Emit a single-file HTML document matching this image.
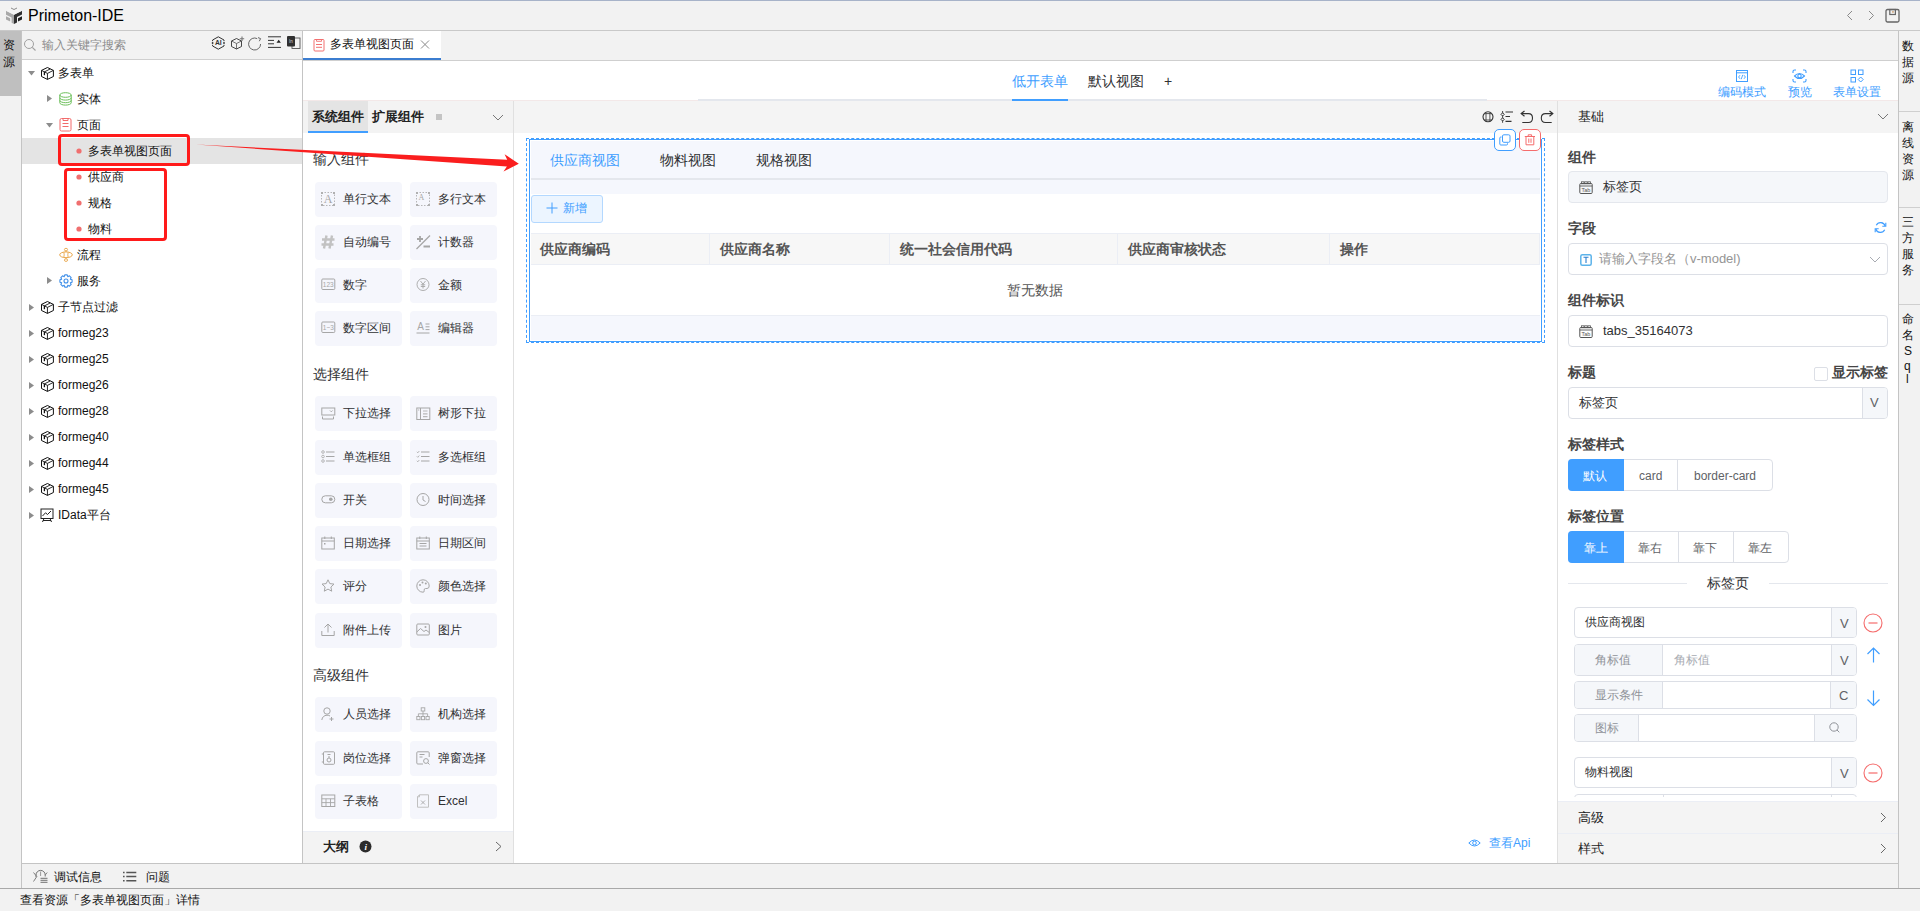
<!DOCTYPE html>
<html><head><meta charset="utf-8">
<style>
*{box-sizing:border-box;margin:0;padding:0}
html,body{width:1920px;height:911px;overflow:hidden;background:#f2f2f2;font-family:"Liberation Sans",sans-serif;color:#222;font-size:12px}
.a{position:absolute}
svg{display:block;overflow:visible}
.t{position:absolute;white-space:nowrap;line-height:1}
</style></head><body>
<div class="a" style="left:0px;top:0px;width:1920px;height:1px;background:#a7b3c9;"></div>
<div class="a" style="left:0px;top:30px;width:1920px;height:1px;background:#c9c9c9;"></div>
<div class="a" style="left:0px;top:31px;width:21px;height:65px;background:#bfbfbf;"></div>
<div class="a" style="left:21px;top:31px;width:1px;height:857px;background:#c4c4c4;"></div>
<div class="a" style="left:22px;top:31px;width:280px;height:28px;background:#f2f2f2;"></div>
<div class="a" style="left:22px;top:59px;width:280px;height:1px;background:#cfcfcf;"></div>
<div class="a" style="left:22px;top:60px;width:280px;height:803px;background:#fff;"></div>
<div class="a" style="left:302px;top:31px;width:1px;height:832px;background:#c4c4c4;"></div>
<div class="a" style="left:303px;top:31px;width:138px;height:27px;background:#fff;"></div>
<div class="a" style="left:303px;top:58px;width:138px;height:2px;background:#3b7dd0;"></div>
<div class="a" style="left:303px;top:60px;width:1595px;height:1px;background:#cfcfcf;"></div>
<div class="a" style="left:303px;top:61px;width:1595px;height:39px;background:#fff;"></div>
<div class="a" style="left:1898px;top:31px;width:1px;height:857px;background:#c4c4c4;"></div>
<div class="a" style="left:22px;top:863px;width:1876px;height:1px;background:#c4c4c4;"></div>
<div class="a" style="left:0px;top:888px;width:1920px;height:1px;background:#a9a9a9;"></div>
<svg class="a" style="left:0px;top:0px" width="24" height="24" viewBox="0 0 24 24">
<path d="M6 11 L14 15 L14 18 L12 17 L12 23.5 L14 24.5 L14 24 Z" fill="none"/>
<path d="M6 10.8 L14 14.8 L14 24 L11.6 22.8 L11.6 17.6 L6 14.8 Z" fill="#a9a9a9"/>
<path d="M6 16.2 L10.2 18.3 L10.2 21.6 L6 19.5 Z" fill="#a9a9a9"/>
<path d="M14 14.8 L22 10.8 L22 14.6 L17 17.1 L17 22.5 L14 24 Z" fill="#2f2f2f"/>
<path d="M18 18.2 L22 16.2 L22 19.6 L18 21.6 Z" fill="#222"/>
<path d="M6 10.8 L14 6.8 L22 10.8 L14 14.8 Z" fill="#f4f4f4"/>
<path d="M11 8.6 L14 10.1 L17 8.6 L17 7.6 L14 9.1 L11 7.6 Z" fill="#8a8a8a"/>
</svg>
<div class="t" style="left:28px;top:8px;font-size:16px;color:#000;font-weight:normal;">Primeton-IDE</div>
<svg class="a" style="left:1846px;top:10px" width="8" height="11" viewBox="0 0 8 11"><path d="M6 1 L1.5 5.5 L6 10" fill="none" stroke="#8a8a8a" stroke-width="1"/></svg>
<svg class="a" style="left:1867px;top:10px" width="8" height="11" viewBox="0 0 8 11"><path d="M2 1 L6.5 5.5 L2 10" fill="none" stroke="#8a8a8a" stroke-width="1"/></svg>
<svg class="a" style="left:1885px;top:8px" width="16" height="16" viewBox="0 0 16 16"><rect x="1" y="1.5" width="13" height="12.5" rx="1.5" fill="none" stroke="#666" stroke-width="1.3"/><rect x="4.8" y="1.5" width="5.6" height="5" fill="none" stroke="#666" stroke-width="1.2"/><rect x="7.3" y="3.2" width="1.3" height="1.4" fill="#c08040"/></svg>
<div class="t" style="left:3px;top:39px;font-size:12px;color:#111;font-weight:normal;">资</div>
<div class="t" style="left:3px;top:56px;font-size:12px;color:#111;font-weight:normal;">源</div>
<svg class="a" style="left:23px;top:38px" width="14" height="14" viewBox="0 0 14 14"><circle cx="6" cy="6" r="4.5" fill="none" stroke="#a0a0a0" stroke-width="1"/><path d="M9.3 9.3 L12.5 12.5" stroke="#a0a0a0" stroke-width="1.1"/></svg>
<div class="t" style="left:42px;top:39px;font-size:12px;color:#8c8c8c;font-weight:normal;">输入关键字搜索</div>
<svg class="a" style="left:211px;top:36px" width="15" height="14" viewBox="0 0 15 14"><path d="M1.6 5.2 V4 L7.3 0.8 L13 4 V5.2 M13 8.8 V10 L7.3 13.2 L1.6 10 V8.8" fill="none" stroke="#333" stroke-width="1"/><circle cx="1.6" cy="7" r="0.9" fill="#333"/><circle cx="13" cy="7" r="0.9" fill="#333"/><text x="7.3" y="9.4" font-size="6.8" font-weight="bold" text-anchor="middle" fill="#333" font-family="Liberation Sans">AI</text></svg>
<svg class="a" style="left:230px;top:36px" width="15" height="14" viewBox="0 0 15 14"><path d="M6.5 2.5 L11.5 5 L11.5 10.5 L6.5 13 L1.5 10.5 L1.5 5 Z" fill="none" stroke="#333" stroke-width="0.9"/><path d="M1.5 5 L6.5 7.5 L11.5 5 M6.5 7.5 L6.5 13" fill="none" stroke="#555" stroke-width="0.8"/><path d="M12 0.5 L12 5 M9.8 2.8 L14.2 2.8" stroke="#777" stroke-width="1.1"/></svg>
<svg class="a" style="left:248px;top:37px" width="14" height="14" viewBox="0 0 14 14"><path d="M12.6 7 A6 6 0 1 1 9.2 1.6" fill="none" stroke="#666" stroke-width="1"/><path d="M10 0.6 L12.6 1.6 L11.3 4.2" fill="none" stroke="#666" stroke-width="1"/></svg>
<svg class="a" style="left:267px;top:36px" width="15" height="13" viewBox="0 0 15 13"><path d="M1 0.8 H14 M1 4.4 H7 M1 7.8 H7 M1 11.4 H14" stroke="#333" stroke-width="1"/><path d="M9.5 6.8 L11.7 3.8 L13.9 6.8 Z" fill="#222"/></svg>
<svg class="a" style="left:286px;top:35px" width="15" height="15" viewBox="0 0 15 15"><rect x="6" y="3" width="8" height="10.5" fill="none" stroke="#555" stroke-width="0.9"/><rect x="1" y="1" width="8" height="10.5" rx="1" fill="#2f2f2f"/><text x="5" y="7.5" font-size="4.5" fill="#ddd" text-anchor="middle" font-family="Liberation Sans">In</text></svg>
<div class="a" style="left:22px;top:138px;width:280px;height:26px;background:#e4e4e4;"></div>
<svg class="a" style="left:28px;top:71px" width="7" height="5" viewBox="0 0 7 5"><path d="M0 0 L7 0 L3.5 4.5 Z" fill="#8c8c8c"/></svg>
<svg class="a" style="left:41px;top:67px" width="13" height="13" viewBox="0 0 13 13"><path d="M6.45 0.5 L12.4 3.4 L12.4 9.5 L6.45 12.4 L0.5 9.5 L0.5 3.4 Z" fill="none" stroke="#111" stroke-width="1"/><path d="M0.5 3.4 L6.45 6.4 L12.4 3.4 M6.45 6.4 V12.4 M3.4 4.9 L9.2 2" fill="none" stroke="#111" stroke-width="0.9"/><path d="M3.4 4.9 V8.2" stroke="#111" stroke-width="1.3"/></svg>
<div class="t" style="left:58px;top:67px;font-size:12px;color:#111;font-weight:normal;">多表单</div>
<svg class="a" style="left:47px;top:95px" width="5" height="7" viewBox="0 0 5 7"><path d="M0 0 L5 3.5 L0 7 Z" fill="#8c8c8c"/></svg>
<svg class="a" style="left:59px;top:92px" width="13" height="14" viewBox="0 0 13 14"><ellipse cx="6.5" cy="3" rx="5.7" ry="2.3" fill="none" stroke="#6cbf5a" stroke-width="1"/><path d="M0.8 3 V10.8 A5.7 2.3 0 0 0 12.2 10.8 V3 M0.8 5.8 A5.7 2.3 0 0 0 12.2 5.8 M0.8 8.4 A5.7 2.3 0 0 0 12.2 8.4" fill="none" stroke="#6cbf5a" stroke-width="1"/></svg>
<div class="t" style="left:77px;top:93px;font-size:12px;color:#111;font-weight:normal;">实体</div>
<svg class="a" style="left:46px;top:123px" width="7" height="5" viewBox="0 0 7 5"><path d="M0 0 L7 0 L3.5 4.5 Z" fill="#8c8c8c"/></svg>
<svg class="a" style="left:59px;top:117px" width="13" height="15" viewBox="0 0 13 15"><rect x="1" y="1.5" width="11" height="12.5" rx="1.5" fill="none" stroke="#f26b6b" stroke-width="1"/><path d="M4 1.5 V3.5 H9 V1.5" fill="none" stroke="#f26b6b" stroke-width="1"/><path d="M3.5 6.5 H9.5 M3.5 9.5 H9.5" stroke="#f26b6b" stroke-width="1.1"/></svg>
<div class="t" style="left:77px;top:119px;font-size:12px;color:#111;font-weight:normal;">页面</div>
<svg class="a" style="left:76px;top:148px" width="6" height="6" viewBox="0 0 6 6"><circle cx="3" cy="3" r="2.6" fill="#f06f6f"/></svg>
<div class="t" style="left:88px;top:145px;font-size:12px;color:#111;font-weight:normal;">多表单视图页面</div>
<svg class="a" style="left:76px;top:174px" width="6" height="6" viewBox="0 0 6 6"><circle cx="3" cy="3" r="2.6" fill="#f06f6f"/></svg>
<div class="t" style="left:88px;top:171px;font-size:12px;color:#111;font-weight:normal;">供应商</div>
<svg class="a" style="left:76px;top:200px" width="6" height="6" viewBox="0 0 6 6"><circle cx="3" cy="3" r="2.6" fill="#f06f6f"/></svg>
<div class="t" style="left:88px;top:197px;font-size:12px;color:#111;font-weight:normal;">规格</div>
<svg class="a" style="left:76px;top:226px" width="6" height="6" viewBox="0 0 6 6"><circle cx="3" cy="3" r="2.6" fill="#f06f6f"/></svg>
<div class="t" style="left:88px;top:223px;font-size:12px;color:#111;font-weight:normal;">物料</div>
<svg class="a" style="left:59px;top:247px" width="15" height="16" viewBox="0 0 15 16"><ellipse cx="7" cy="7.8" rx="6.3" ry="2.9" fill="none" stroke="#e9a445" stroke-width="1"/><path d="M4.8 5.2 Q5.6 7.8 4.8 10.4 M9.2 5.2 Q8.4 7.8 9.2 10.4" fill="none" stroke="#e9a445" stroke-width="0.9"/><ellipse cx="7" cy="2.6" rx="1.6" ry="1.3" fill="none" stroke="#e9a445" stroke-width="0.9"/><ellipse cx="7" cy="13.1" rx="1.6" ry="1.3" fill="none" stroke="#e9a445" stroke-width="0.9"/><path d="M7 3.9 V4.9 M7 10.7 V11.8" stroke="#e9a445" stroke-width="0.9"/></svg>
<div class="t" style="left:77px;top:249px;font-size:12px;color:#111;font-weight:normal;">流程</div>
<svg class="a" style="left:47px;top:277px" width="5" height="7" viewBox="0 0 5 7"><path d="M0 0 L5 3.5 L0 7 Z" fill="#8c8c8c"/></svg>
<svg class="a" style="left:59px;top:274px" width="14" height="14" viewBox="0 0 14 14"><path d="M11.35 5.21 L13.08 5.77 L13.08 8.23 L11.35 8.79 L11.34 8.81 L12.17 10.43 L10.43 12.17 L8.81 11.34 L8.79 11.35 L8.23 13.08 L5.77 13.08 L5.21 11.35 L5.19 11.34 L3.57 12.17 L1.83 10.43 L2.66 8.81 L2.65 8.79 L0.92 8.23 L0.92 5.77 L2.65 5.21 L2.66 5.19 L1.83 3.57 L3.57 1.83 L5.19 2.66 L5.21 2.65 L5.77 0.92 L8.23 0.92 L8.79 2.65 L8.81 2.66 L10.43 1.83 L12.17 3.57 L11.34 5.19 Z" fill="none" stroke="#3f8fe8" stroke-width="1.1" stroke-linejoin="round"/><circle cx="7" cy="7" r="2" fill="none" stroke="#3f8fe8" stroke-width="1.1"/></svg>
<div class="t" style="left:77px;top:275px;font-size:12px;color:#111;font-weight:normal;">服务</div>
<svg class="a" style="left:29px;top:304px" width="5" height="7" viewBox="0 0 5 7"><path d="M0 0 L5 3.5 L0 7 Z" fill="#8c8c8c"/></svg>
<svg class="a" style="left:41px;top:301px" width="13" height="13" viewBox="0 0 13 13"><path d="M6.45 0.5 L12.4 3.4 L12.4 9.5 L6.45 12.4 L0.5 9.5 L0.5 3.4 Z" fill="none" stroke="#111" stroke-width="1"/><path d="M0.5 3.4 L6.45 6.4 L12.4 3.4 M6.45 6.4 V12.4 M3.4 4.9 L9.2 2" fill="none" stroke="#111" stroke-width="0.9"/><path d="M3.4 4.9 V8.2" stroke="#111" stroke-width="1.3"/></svg>
<div class="t" style="left:58px;top:301px;font-size:12px;color:#111;font-weight:normal;">子节点过滤</div>
<svg class="a" style="left:29px;top:330px" width="5" height="7" viewBox="0 0 5 7"><path d="M0 0 L5 3.5 L0 7 Z" fill="#8c8c8c"/></svg>
<svg class="a" style="left:41px;top:327px" width="13" height="13" viewBox="0 0 13 13"><path d="M6.45 0.5 L12.4 3.4 L12.4 9.5 L6.45 12.4 L0.5 9.5 L0.5 3.4 Z" fill="none" stroke="#111" stroke-width="1"/><path d="M0.5 3.4 L6.45 6.4 L12.4 3.4 M6.45 6.4 V12.4 M3.4 4.9 L9.2 2" fill="none" stroke="#111" stroke-width="0.9"/><path d="M3.4 4.9 V8.2" stroke="#111" stroke-width="1.3"/></svg>
<div class="t" style="left:58px;top:327px;font-size:12px;color:#111;font-weight:normal;">formeg23</div>
<svg class="a" style="left:29px;top:356px" width="5" height="7" viewBox="0 0 5 7"><path d="M0 0 L5 3.5 L0 7 Z" fill="#8c8c8c"/></svg>
<svg class="a" style="left:41px;top:353px" width="13" height="13" viewBox="0 0 13 13"><path d="M6.45 0.5 L12.4 3.4 L12.4 9.5 L6.45 12.4 L0.5 9.5 L0.5 3.4 Z" fill="none" stroke="#111" stroke-width="1"/><path d="M0.5 3.4 L6.45 6.4 L12.4 3.4 M6.45 6.4 V12.4 M3.4 4.9 L9.2 2" fill="none" stroke="#111" stroke-width="0.9"/><path d="M3.4 4.9 V8.2" stroke="#111" stroke-width="1.3"/></svg>
<div class="t" style="left:58px;top:353px;font-size:12px;color:#111;font-weight:normal;">formeg25</div>
<svg class="a" style="left:29px;top:382px" width="5" height="7" viewBox="0 0 5 7"><path d="M0 0 L5 3.5 L0 7 Z" fill="#8c8c8c"/></svg>
<svg class="a" style="left:41px;top:379px" width="13" height="13" viewBox="0 0 13 13"><path d="M6.45 0.5 L12.4 3.4 L12.4 9.5 L6.45 12.4 L0.5 9.5 L0.5 3.4 Z" fill="none" stroke="#111" stroke-width="1"/><path d="M0.5 3.4 L6.45 6.4 L12.4 3.4 M6.45 6.4 V12.4 M3.4 4.9 L9.2 2" fill="none" stroke="#111" stroke-width="0.9"/><path d="M3.4 4.9 V8.2" stroke="#111" stroke-width="1.3"/></svg>
<div class="t" style="left:58px;top:379px;font-size:12px;color:#111;font-weight:normal;">formeg26</div>
<svg class="a" style="left:29px;top:408px" width="5" height="7" viewBox="0 0 5 7"><path d="M0 0 L5 3.5 L0 7 Z" fill="#8c8c8c"/></svg>
<svg class="a" style="left:41px;top:405px" width="13" height="13" viewBox="0 0 13 13"><path d="M6.45 0.5 L12.4 3.4 L12.4 9.5 L6.45 12.4 L0.5 9.5 L0.5 3.4 Z" fill="none" stroke="#111" stroke-width="1"/><path d="M0.5 3.4 L6.45 6.4 L12.4 3.4 M6.45 6.4 V12.4 M3.4 4.9 L9.2 2" fill="none" stroke="#111" stroke-width="0.9"/><path d="M3.4 4.9 V8.2" stroke="#111" stroke-width="1.3"/></svg>
<div class="t" style="left:58px;top:405px;font-size:12px;color:#111;font-weight:normal;">formeg28</div>
<svg class="a" style="left:29px;top:434px" width="5" height="7" viewBox="0 0 5 7"><path d="M0 0 L5 3.5 L0 7 Z" fill="#8c8c8c"/></svg>
<svg class="a" style="left:41px;top:431px" width="13" height="13" viewBox="0 0 13 13"><path d="M6.45 0.5 L12.4 3.4 L12.4 9.5 L6.45 12.4 L0.5 9.5 L0.5 3.4 Z" fill="none" stroke="#111" stroke-width="1"/><path d="M0.5 3.4 L6.45 6.4 L12.4 3.4 M6.45 6.4 V12.4 M3.4 4.9 L9.2 2" fill="none" stroke="#111" stroke-width="0.9"/><path d="M3.4 4.9 V8.2" stroke="#111" stroke-width="1.3"/></svg>
<div class="t" style="left:58px;top:431px;font-size:12px;color:#111;font-weight:normal;">formeg40</div>
<svg class="a" style="left:29px;top:460px" width="5" height="7" viewBox="0 0 5 7"><path d="M0 0 L5 3.5 L0 7 Z" fill="#8c8c8c"/></svg>
<svg class="a" style="left:41px;top:457px" width="13" height="13" viewBox="0 0 13 13"><path d="M6.45 0.5 L12.4 3.4 L12.4 9.5 L6.45 12.4 L0.5 9.5 L0.5 3.4 Z" fill="none" stroke="#111" stroke-width="1"/><path d="M0.5 3.4 L6.45 6.4 L12.4 3.4 M6.45 6.4 V12.4 M3.4 4.9 L9.2 2" fill="none" stroke="#111" stroke-width="0.9"/><path d="M3.4 4.9 V8.2" stroke="#111" stroke-width="1.3"/></svg>
<div class="t" style="left:58px;top:457px;font-size:12px;color:#111;font-weight:normal;">formeg44</div>
<svg class="a" style="left:29px;top:486px" width="5" height="7" viewBox="0 0 5 7"><path d="M0 0 L5 3.5 L0 7 Z" fill="#8c8c8c"/></svg>
<svg class="a" style="left:41px;top:483px" width="13" height="13" viewBox="0 0 13 13"><path d="M6.45 0.5 L12.4 3.4 L12.4 9.5 L6.45 12.4 L0.5 9.5 L0.5 3.4 Z" fill="none" stroke="#111" stroke-width="1"/><path d="M0.5 3.4 L6.45 6.4 L12.4 3.4 M6.45 6.4 V12.4 M3.4 4.9 L9.2 2" fill="none" stroke="#111" stroke-width="0.9"/><path d="M3.4 4.9 V8.2" stroke="#111" stroke-width="1.3"/></svg>
<div class="t" style="left:58px;top:483px;font-size:12px;color:#111;font-weight:normal;">formeg45</div>
<svg class="a" style="left:29px;top:512px" width="5" height="7" viewBox="0 0 5 7"><path d="M0 0 L5 3.5 L0 7 Z" fill="#8c8c8c"/></svg>
<svg class="a" style="left:40px;top:508px" width="14" height="15" viewBox="0 0 14 15"><rect x="1" y="1" width="12" height="9.5" fill="none" stroke="#222" stroke-width="1"/><path d="M2.5 8 L5.5 4.8 L7.5 6.5 L11 3" fill="none" stroke="#222" stroke-width="1"/><path d="M4 10.5 L2.5 14 M10 10.5 L11.5 14 M3 12.5 H11" stroke="#222" stroke-width="1"/></svg>
<div class="t" style="left:58px;top:509px;font-size:12px;color:#111;font-weight:normal;">IData平台</div>
<svg class="a" style="left:313px;top:38px" width="12" height="14" viewBox="0 0 12 14"><rect x="1" y="1.5" width="10" height="11.5" rx="1" fill="none" stroke="#f27070" stroke-width="1"/><path d="M3.5 1.5 V3.3 H8.5 V1.5" fill="none" stroke="#f27070" stroke-width="0.9"/><path d="M3 6.5 H9 M3 9.3 H9" stroke="#f27070" stroke-width="1"/></svg>
<div class="t" style="left:330px;top:38px;font-size:12px;color:#111;font-weight:normal;">多表单视图页面</div>
<svg class="a" style="left:420px;top:40px" width="10" height="9" viewBox="0 0 10 9"><path d="M1 0.5 L9 8.5 M9 0.5 L1 8.5" stroke="#8a8a8a" stroke-width="1"/></svg>
<div class="a" style="left:303px;top:100px;width:1595px;height:1px;background:#f3e8e8;"></div>
<div class="a" style="left:698px;top:99px;width:789px;height:2px;background:#e4e7ed;"></div>
<div class="a" style="left:1012px;top:99px;width:56px;height:2px;background:#409eff;"></div>
<div class="t" style="left:1012px;top:74px;font-size:14px;color:#409eff;font-weight:normal;">低开表单</div>
<div class="t" style="left:1088px;top:74px;font-size:14px;color:#303133;font-weight:normal;">默认视图</div>
<div class="t" style="left:1164px;top:74px;font-size:14px;color:#303133;font-weight:normal;">+</div>
<svg class="a" style="left:1735px;top:69px" width="14" height="14" viewBox="0 0 14 14"><rect x="1.5" y="1.5" width="11" height="11" fill="none" stroke="#409eff" stroke-width="1"/><path d="M1.5 3.8 H12.5" stroke="#409eff" stroke-width="1"/><path d="M5 6.2 L3.6 8 L5 9.8 M9 6.2 L10.4 8 L9 9.8 M7.8 5.8 L6.2 10.2" fill="none" stroke="#409eff" stroke-width="0.9"/></svg>
<div class="t" style="left:1718px;top:86px;font-size:12px;color:#409eff;font-weight:normal;">编码模式</div>
<svg class="a" style="left:1792px;top:69px" width="15" height="14" viewBox="0 0 15 14"><path d="M1 4 V2.5 Q1 1 2.5 1 H4 M11 1 H12.5 Q14 1 14 2.5 V4 M14 10 V11.5 Q14 13 12.5 13 H11 M4 13 H2.5 Q1 13 1 11.5 V10" fill="none" stroke="#409eff" stroke-width="1.1"/><path d="M2.5 7 Q7.5 2 12.5 7 Q7.5 12 2.5 7 Z" fill="none" stroke="#409eff" stroke-width="1.1"/><circle cx="7.5" cy="7" r="1.7" fill="none" stroke="#409eff" stroke-width="1.1"/></svg>
<div class="t" style="left:1788px;top:86px;font-size:12px;color:#409eff;font-weight:normal;">预览</div>
<svg class="a" style="left:1850px;top:69px" width="14" height="14" viewBox="0 0 14 14"><rect x="1" y="1" width="4.5" height="4.5" fill="none" stroke="#409eff" stroke-width="1"/><rect x="8.5" y="1" width="4.5" height="4.5" fill="none" stroke="#409eff" stroke-width="1"/><rect x="1" y="8.5" width="4.5" height="4.5" fill="none" stroke="#409eff" stroke-width="1"/><path d="M10.7 8 L13.2 10.5 L10.7 13 L8.2 10.5 Z" fill="none" stroke="#409eff" stroke-width="1"/></svg>
<div class="t" style="left:1833px;top:86px;font-size:12px;color:#409eff;font-weight:normal;">表单设置</div>
<div class="a" style="left:303px;top:101px;width:210px;height:32px;background:#f3f3f3;"></div>
<div class="a" style="left:303px;top:133px;width:210px;height:698px;background:#fff;"></div>
<div class="a" style="left:513px;top:101px;width:1px;height:762px;background:#e0e0e0;"></div>
<div class="a" style="left:308px;top:101px;width:60px;height:30px;background:#e4e4e4;"></div>
<div class="a" style="left:308px;top:131px;width:60px;height:2px;background:#409eff;"></div>
<div class="t" style="left:312px;top:110px;font-size:13px;color:#222;font-weight:bold;">系统组件</div>
<div class="t" style="left:372px;top:110px;font-size:13px;color:#222;font-weight:bold;">扩展组件</div>
<div class="a" style="left:436px;top:114px;width:6px;height:6px;background:#c4c4c4;"></div>
<svg class="a" style="left:492px;top:114px" width="12" height="8" viewBox="0 0 12 8"><path d="M1 1 L6 6 L11 1" fill="none" stroke="#777" stroke-width="1"/></svg>
<div class="a" style="left:303px;top:831px;width:210px;height:1px;background:#ebeef5;"></div>
<div class="a" style="left:303px;top:832px;width:210px;height:31px;background:#f3f3f3;"></div>
<div class="t" style="left:323px;top:840px;font-size:13px;color:#222;font-weight:bold;">大纲</div>
<svg class="a" style="left:359px;top:840px" width="13" height="13" viewBox="0 0 13 13"><circle cx="6.5" cy="6.5" r="6" fill="#2b2b2b"/><text x="6.8" y="10.3" font-size="9" font-weight="bold" font-style="italic" fill="#fff" text-anchor="middle" font-family="Liberation Serif">i</text></svg>
<svg class="a" style="left:495px;top:841px" width="7" height="11" viewBox="0 0 7 11"><path d="M1 1 L6 5.5 L1 10" fill="none" stroke="#666" stroke-width="1"/></svg>
<div class="a" style="left:514px;top:101px;width:1043px;height:32px;background:#f4f4f4;"></div>
<div class="a" style="left:514px;top:133px;width:1043px;height:730px;background:#fff;"></div>
<div class="a" style="left:1557px;top:101px;width:1px;height:762px;background:#e0e0e0;"></div>
<svg class="a" style="left:1478px;top:106px" width="78" height="22" viewBox="0 0 78 22">
<circle cx="10" cy="10.8" r="5" fill="none" stroke="#333" stroke-width="1.1"/>
<path d="M8 6.2 V15.4 M11.9 6.2 V15.4 M6 7.6 H14 M6 14 H14" stroke="#444" stroke-width="0.9"/>
<path d="M24.6 5 V16.8" stroke="#333" stroke-width="0.9"/>
<path d="M24.6 6.8 L26.2 8.4 L24.6 10 L23 8.4 Z M24.6 11.8 L26.2 13.4 L24.6 15 L23 13.4 Z" fill="#f4f4f4" stroke="#333" stroke-width="1"/>
<path d="M27.5 6 H35 M27.5 10.5 H32 M27.5 15.3 H33.5" stroke="#333" stroke-width="1.2"/>
<path d="M46.5 5 L43.2 7.6 L46.5 10.3" fill="none" stroke="#333" stroke-width="1.2"/>
<path d="M43.6 7.6 H50.5 Q54.5 7.6 54.5 12 Q54.5 16.5 50.5 16.5 H44.3" fill="none" stroke="#333" stroke-width="1.1"/>
<path d="M71.5 5 L74.8 7.6 L71.5 10.3" fill="none" stroke="#333" stroke-width="1.2"/>
<path d="M74.4 7.6 H67.5 Q63.3 7.6 63.3 12 Q63.3 16.5 67.5 16.5 H73.7" fill="none" stroke="#333" stroke-width="1.1"/>
</svg>
<div class="a" style="left:1558px;top:101px;width:340px;height:32px;background:#f4f4f4;"></div>
<div class="a" style="left:1558px;top:133px;width:340px;height:669px;background:#fff;"></div>
<div class="t" style="left:1578px;top:110px;font-size:13px;color:#222;font-weight:normal;">基础</div>
<svg class="a" style="left:1877px;top:113px" width="12" height="8" viewBox="0 0 12 8"><path d="M1 1 L6 6 L11 1" fill="none" stroke="#777" stroke-width="1"/></svg>
<div class="t" style="left:313px;top:152px;font-size:14px;color:#303133;font-weight:normal;">输入组件</div>
<div class="t" style="left:313px;top:367px;font-size:14px;color:#303133;font-weight:normal;">选择组件</div>
<div class="t" style="left:313px;top:668px;font-size:14px;color:#303133;font-weight:normal;">高级组件</div>
<div class="a" style="left:315px;top:182px;width:87px;height:35px;background:#f5f6fc;border-radius:4px"></div>
<svg class="a" style="left:321px;top:192px" width="15" height="15" viewBox="0 0 15 15"><rect x="0.5" y="0.5" width="13" height="13" fill="none" stroke="#a6a6a6" stroke-width="0.8" stroke-dasharray="1.5 1.5"/><path d="M0 0 H2 V2 H0 Z M12 0 H14 V2 H12 Z M0 12 H2 V14 H0 Z M12 12 H14 V14 H12 Z" fill="#b0b0b0"/><text x="7" y="11.3" font-size="12" text-anchor="middle" fill="#a6a6a6" font-family="Liberation Serif">A</text></svg>
<div class="t" style="left:343px;top:193px;font-size:12px;color:#303133;font-weight:normal;">单行文本</div>
<div class="a" style="left:410px;top:182px;width:87px;height:35px;background:#f5f6fc;border-radius:4px"></div>
<svg class="a" style="left:416px;top:192px" width="15" height="15" viewBox="0 0 15 15"><rect x="0.5" y="0.5" width="13" height="13" fill="none" stroke="#a6a6a6" stroke-width="0.8" stroke-dasharray="1.5 1.5"/><path d="M0 0 H2 V2 H0 Z M12 0 H14 V2 H12 Z M0 12 H2 V14 H0 Z M12 12 H14 V14 H12 Z" fill="#b0b0b0"/><text x="5.5" y="7.5" font-size="8" text-anchor="middle" fill="#a6a6a6" font-family="Liberation Serif">A</text></svg>
<div class="t" style="left:438px;top:193px;font-size:12px;color:#303133;font-weight:normal;">多行文本</div>
<div class="a" style="left:315px;top:225px;width:87px;height:35px;background:#f5f6fc;border-radius:4px"></div>
<svg class="a" style="left:321px;top:235px" width="15" height="15" viewBox="0 0 15 15"><path d="M5.5 0.5 L3 13.5 M11 0.5 L8.5 13.5 M1 4.5 H13.5 M0.5 9.5 H12.5" stroke="#c2c2c2" stroke-width="2.4" fill="none"/><g fill="#a6a6a6" stroke="#a6a6a6"></g></svg>
<div class="t" style="left:343px;top:236px;font-size:12px;color:#303133;font-weight:normal;">自动编号</div>
<div class="a" style="left:410px;top:225px;width:87px;height:35px;background:#f5f6fc;border-radius:4px"></div>
<svg class="a" style="left:416px;top:235px" width="15" height="15" viewBox="0 0 15 15"><path d="M1 4 H7 M4 1 V7 M7.5 11.5 H14" stroke="#a6a6a6" stroke-width="1.8" fill="none"/><path d="M0.5 14 L14 0.5" stroke="#a6a6a6" stroke-width="1.2"/></svg>
<div class="t" style="left:438px;top:236px;font-size:12px;color:#303133;font-weight:normal;">计数器</div>
<div class="a" style="left:315px;top:268px;width:87px;height:35px;background:#f5f6fc;border-radius:4px"></div>
<svg class="a" style="left:321px;top:278px" width="15" height="15" viewBox="0 0 15 15"><rect x="0.8" y="1" width="13" height="10.5" rx="1" fill="none" stroke="#a6a6a6" stroke-width="1"/><text x="7.3" y="9.2" font-size="6.5" text-anchor="middle" fill="#a6a6a6" font-family="Liberation Sans">123</text></svg>
<div class="t" style="left:343px;top:279px;font-size:12px;color:#303133;font-weight:normal;">数字</div>
<div class="a" style="left:410px;top:268px;width:87px;height:35px;background:#f5f6fc;border-radius:4px"></div>
<svg class="a" style="left:416px;top:278px" width="15" height="15" viewBox="0 0 15 15"><circle cx="7" cy="6.5" r="6" fill="none" stroke="#a6a6a6" stroke-width="0.9"/><path d="M4.5 3 L7 6.2 L9.5 3 M7 6.2 V10.5 M4.8 6.8 H9.2 M4.8 8.5 H9.2" fill="none" stroke="#a6a6a6" stroke-width="0.9"/></svg>
<div class="t" style="left:438px;top:279px;font-size:12px;color:#303133;font-weight:normal;">金额</div>
<div class="a" style="left:315px;top:311px;width:87px;height:35px;background:#f5f6fc;border-radius:4px"></div>
<svg class="a" style="left:321px;top:321px" width="15" height="15" viewBox="0 0 15 15"><rect x="0.8" y="1" width="13" height="10.5" rx="1" fill="none" stroke="#a6a6a6" stroke-width="1"/><text x="7.3" y="9.2" font-size="6.5" text-anchor="middle" fill="#a6a6a6" font-family="Liberation Sans">1~3</text></svg>
<div class="t" style="left:343px;top:322px;font-size:12px;color:#303133;font-weight:normal;">数字区间</div>
<div class="a" style="left:410px;top:311px;width:87px;height:35px;background:#f5f6fc;border-radius:4px"></div>
<svg class="a" style="left:416px;top:321px" width="15" height="15" viewBox="0 0 15 15"><text x="4.5" y="9" font-size="10" text-anchor="middle" fill="#a6a6a6" font-family="Liberation Sans">A</text><path d="M9.5 3 H13.5 M9.5 5.8 H13.5 M9.5 8.6 H13.5 M0.5 12 H13.5" stroke="#a6a6a6" stroke-width="1" /></svg>
<div class="t" style="left:438px;top:322px;font-size:12px;color:#303133;font-weight:normal;">编辑器</div>
<div class="a" style="left:315px;top:396px;width:87px;height:35px;background:#f5f6fc;border-radius:4px"></div>
<svg class="a" style="left:321px;top:406px" width="15" height="15" viewBox="0 0 15 15"><rect x="0.8" y="2" width="13" height="7" fill="none" stroke="#a6a6a6" stroke-width="1"/><path d="M9 4.5 L10.3 5.8 L11.6 4.5 M1.5 10.5 V13 H12.5 V10.5" fill="none" stroke="#a6a6a6" stroke-width="1"/></svg>
<div class="t" style="left:343px;top:407px;font-size:12px;color:#303133;font-weight:normal;">下拉选择</div>
<div class="a" style="left:410px;top:396px;width:87px;height:35px;background:#f5f6fc;border-radius:4px"></div>
<svg class="a" style="left:416px;top:406px" width="15" height="15" viewBox="0 0 15 15"><rect x="0.8" y="2" width="13" height="11.5" fill="none" stroke="#a6a6a6" stroke-width="1"/><path d="M4.5 2 V13.5" stroke="#a6a6a6" stroke-width="1"/><path d="M7 5 H11.5 M7 7.8 H11.5 M7 10.6 H11.5" stroke="#b8b8b8" stroke-width="1.2"/><rect x="2.2" y="3.5" width="1" height="1" fill="#a6a6a6"/></svg>
<div class="t" style="left:438px;top:407px;font-size:12px;color:#303133;font-weight:normal;">树形下拉</div>
<div class="a" style="left:315px;top:440px;width:87px;height:35px;background:#f5f6fc;border-radius:4px"></div>
<svg class="a" style="left:321px;top:450px" width="15" height="15" viewBox="0 0 15 15"><circle cx="2" cy="2" r="1.3" fill="none" stroke="#a6a6a6" stroke-width="0.8"/><circle cx="2" cy="6.5" r="1.3" fill="none" stroke="#a6a6a6" stroke-width="0.8"/><circle cx="2" cy="11" r="1.3" fill="none" stroke="#a6a6a6" stroke-width="0.8"/><path d="M5 2 H13.5 M5 6.5 H13.5 M5 11 H13.5" stroke="#a6a6a6" stroke-width="1"/></svg>
<div class="t" style="left:343px;top:451px;font-size:12px;color:#303133;font-weight:normal;">单选框组</div>
<div class="a" style="left:410px;top:440px;width:87px;height:35px;background:#f5f6fc;border-radius:4px"></div>
<svg class="a" style="left:416px;top:450px" width="15" height="15" viewBox="0 0 15 15"><path d="M0.8 1.8 L1.8 2.8 L3.3 1 M0.8 6.3 L1.8 7.3 L3.3 5.5 M0.8 10.8 L1.8 11.8 L3.3 10" fill="none" stroke="#a6a6a6" stroke-width="0.8"/><path d="M5 2 H13.5 M5 6.5 H13.5 M5 11 H13.5" stroke="#a6a6a6" stroke-width="1"/></svg>
<div class="t" style="left:438px;top:451px;font-size:12px;color:#303133;font-weight:normal;">多选框组</div>
<div class="a" style="left:315px;top:483px;width:87px;height:35px;background:#f5f6fc;border-radius:4px"></div>
<svg class="a" style="left:321px;top:493px" width="15" height="15" viewBox="0 0 15 15"><rect x="0.8" y="2.8" width="13" height="7" rx="3.5" fill="none" stroke="#a6a6a6" stroke-width="1"/><circle cx="9.8" cy="6.3" r="1.8" fill="#a6a6a6"/></svg>
<div class="t" style="left:343px;top:494px;font-size:12px;color:#303133;font-weight:normal;">开关</div>
<div class="a" style="left:410px;top:483px;width:87px;height:35px;background:#f5f6fc;border-radius:4px"></div>
<svg class="a" style="left:416px;top:493px" width="15" height="15" viewBox="0 0 15 15"><circle cx="7" cy="6.5" r="6" fill="none" stroke="#a6a6a6" stroke-width="1"/><path d="M7 3 V7 L9.5 8.5" fill="none" stroke="#a6a6a6" stroke-width="1"/></svg>
<div class="t" style="left:438px;top:494px;font-size:12px;color:#303133;font-weight:normal;">时间选择</div>
<div class="a" style="left:315px;top:526px;width:87px;height:35px;background:#f5f6fc;border-radius:4px"></div>
<svg class="a" style="left:321px;top:536px" width="15" height="15" viewBox="0 0 15 15"><rect x="0.8" y="2" width="12.5" height="11" fill="none" stroke="#a6a6a6" stroke-width="1"/><path d="M0.8 5 H13.3 M3.8 0.5 V3 M10.3 0.5 V3" stroke="#a6a6a6" stroke-width="1"/><rect x="3" y="7" width="1.5" height="1.5" fill="#a6a6a6"/></svg>
<div class="t" style="left:343px;top:537px;font-size:12px;color:#303133;font-weight:normal;">日期选择</div>
<div class="a" style="left:410px;top:526px;width:87px;height:35px;background:#f5f6fc;border-radius:4px"></div>
<svg class="a" style="left:416px;top:536px" width="15" height="15" viewBox="0 0 15 15"><rect x="0.8" y="2" width="12.5" height="11" fill="none" stroke="#a6a6a6" stroke-width="1"/><path d="M0.8 5 H13.3 M3.8 0.5 V3 M10.3 0.5 V3 M3.5 7.5 H10.5 M3.5 10 H10.5" stroke="#a6a6a6" stroke-width="1"/></svg>
<div class="t" style="left:438px;top:537px;font-size:12px;color:#303133;font-weight:normal;">日期区间</div>
<div class="a" style="left:315px;top:569px;width:87px;height:35px;background:#f5f6fc;border-radius:4px"></div>
<svg class="a" style="left:321px;top:579px" width="15" height="15" viewBox="0 0 15 15"><path d="M7 0.8 L8.8 4.6 L13 5.1 L9.9 8 L10.7 12.2 L7 10.1 L3.3 12.2 L4.1 8 L1 5.1 L5.2 4.6 Z" fill="none" stroke="#a6a6a6" stroke-width="1"/><g fill="#a6a6a6"></g></svg>
<div class="t" style="left:343px;top:580px;font-size:12px;color:#303133;font-weight:normal;">评分</div>
<div class="a" style="left:410px;top:569px;width:87px;height:35px;background:#f5f6fc;border-radius:4px"></div>
<svg class="a" style="left:416px;top:579px" width="15" height="15" viewBox="0 0 15 15"><path d="M7 0.8 A6.2 6.2 0 1 0 7 13.2 Q8.5 13.2 8.2 11.5 Q7.8 9.5 9.5 9.5 H11 Q13.2 9.5 13.2 7 A6.2 6.2 0 0 0 7 0.8 Z" fill="none" stroke="#a6a6a6" stroke-width="1"/><circle cx="4" cy="6" r="1" fill="#a6a6a6"/><circle cx="6.5" cy="3.5" r="1" fill="#a6a6a6"/><circle cx="9.8" cy="4.5" r="1" fill="#a6a6a6"/></svg>
<div class="t" style="left:438px;top:580px;font-size:12px;color:#303133;font-weight:normal;">颜色选择</div>
<div class="a" style="left:315px;top:613px;width:87px;height:35px;background:#f5f6fc;border-radius:4px"></div>
<svg class="a" style="left:321px;top:623px" width="15" height="15" viewBox="0 0 15 15"><path d="M7 1 V9.5 M3.5 4.5 L7 1 L10.5 4.5 M0.8 8 V12.5 H13.2 V8" fill="none" stroke="#a6a6a6" stroke-width="1"/><g fill="#a6a6a6"></g></svg>
<div class="t" style="left:343px;top:624px;font-size:12px;color:#303133;font-weight:normal;">附件上传</div>
<div class="a" style="left:410px;top:613px;width:87px;height:35px;background:#f5f6fc;border-radius:4px"></div>
<svg class="a" style="left:416px;top:623px" width="15" height="15" viewBox="0 0 15 15"><rect x="0.8" y="1" width="12.5" height="11" rx="1" fill="none" stroke="#a6a6a6" stroke-width="1"/><path d="M0.8 9 L4.5 5.5 L8 8.5 L10 7 L13.3 9.5" fill="none" stroke="#a6a6a6" stroke-width="1"/><circle cx="9.5" cy="4" r="1" fill="#a6a6a6"/></svg>
<div class="t" style="left:438px;top:624px;font-size:12px;color:#303133;font-weight:normal;">图片</div>
<div class="a" style="left:315px;top:697px;width:87px;height:35px;background:#f5f6fc;border-radius:4px"></div>
<svg class="a" style="left:321px;top:707px" width="15" height="15" viewBox="0 0 15 15"><circle cx="6" cy="4" r="3.2" fill="none" stroke="#a6a6a6" stroke-width="1"/><path d="M0.8 13 Q1.5 8.5 6 8.2 Q8 8.2 9 9 M10.5 10 V14 M8.5 12 H12.5" fill="none" stroke="#a6a6a6" stroke-width="1"/></svg>
<div class="t" style="left:343px;top:708px;font-size:12px;color:#303133;font-weight:normal;">人员选择</div>
<div class="a" style="left:410px;top:697px;width:87px;height:35px;background:#f5f6fc;border-radius:4px"></div>
<svg class="a" style="left:416px;top:707px" width="15" height="15" viewBox="0 0 15 15"><rect x="5.2" y="0.8" width="3.6" height="3.2" fill="none" stroke="#a6a6a6" stroke-width="0.9"/><rect x="0.8" y="9.5" width="3.2" height="3.2" fill="none" stroke="#a6a6a6" stroke-width="0.9"/><rect x="5.4" y="9.5" width="3.2" height="3.2" fill="none" stroke="#a6a6a6" stroke-width="0.9"/><rect x="10" y="9.5" width="3.2" height="3.2" fill="none" stroke="#a6a6a6" stroke-width="0.9"/><path d="M7 4 V9.5 M2.4 9.5 V6.8 H11.6 V9.5" fill="none" stroke="#a6a6a6" stroke-width="0.9"/></svg>
<div class="t" style="left:438px;top:708px;font-size:12px;color:#303133;font-weight:normal;">机构选择</div>
<div class="a" style="left:315px;top:741px;width:87px;height:35px;background:#f5f6fc;border-radius:4px"></div>
<svg class="a" style="left:321px;top:751px" width="15" height="15" viewBox="0 0 15 15"><rect x="2.5" y="0.8" width="11" height="12.5" rx="1" fill="none" stroke="#a6a6a6" stroke-width="1"/><path d="M0.8 3 H3 M0.8 11 H3 M6.5 3.5 H9.5" stroke="#a6a6a6" stroke-width="1"/><circle cx="8" cy="9" r="2" fill="none" stroke="#a6a6a6" stroke-width="1"/><path d="M8 5 V7" stroke="#a6a6a6" stroke-width="1"/></svg>
<div class="t" style="left:343px;top:752px;font-size:12px;color:#303133;font-weight:normal;">岗位选择</div>
<div class="a" style="left:410px;top:741px;width:87px;height:35px;background:#f5f6fc;border-radius:4px"></div>
<svg class="a" style="left:416px;top:751px" width="15" height="15" viewBox="0 0 15 15"><path d="M7 13 H1.8 Q0.8 13 0.8 12 V1.8 Q0.8 0.8 1.8 0.8 H12.2 Q13.2 0.8 13.2 1.8 V6" fill="none" stroke="#a6a6a6" stroke-width="1"/><path d="M3.5 3.5 H8.5 M3.5 6 H6.5" stroke="#a6a6a6" stroke-width="1"/><circle cx="10" cy="10" r="2.4" fill="none" stroke="#a6a6a6" stroke-width="1"/><path d="M11.7 11.7 L13.5 13.5" stroke="#a6a6a6" stroke-width="1"/></svg>
<div class="t" style="left:438px;top:752px;font-size:12px;color:#303133;font-weight:normal;">弹窗选择</div>
<div class="a" style="left:315px;top:784px;width:87px;height:35px;background:#f5f6fc;border-radius:4px"></div>
<svg class="a" style="left:321px;top:794px" width="15" height="15" viewBox="0 0 15 15"><rect x="0.8" y="1" width="13" height="11.5" fill="none" stroke="#a6a6a6" stroke-width="1"/><path d="M0.8 4.8 H13.8 M0.8 8.6 H13.8 M5 4.8 V12.5 M9.5 4.8 V12.5" stroke="#a6a6a6" stroke-width="0.9"/></svg>
<div class="t" style="left:343px;top:795px;font-size:12px;color:#303133;font-weight:normal;">子表格</div>
<div class="a" style="left:410px;top:784px;width:87px;height:35px;background:#f5f6fc;border-radius:4px"></div>
<svg class="a" style="left:416px;top:794px" width="15" height="15" viewBox="0 0 15 15"><path d="M3.5 0.8 H12.5 V13.2 H1.5 V2.8 Z M1.5 2.8 H3.5 V0.8" fill="none" stroke="#c0c0c0" stroke-width="1"/><path d="M5 6.5 L9 10.5 M9 6.5 L5 10.5" stroke="#a6a6a6" stroke-width="0.9"/><g fill="#a6a6a6"></g></svg>
<div class="t" style="left:438px;top:795px;font-size:12px;color:#303133;font-weight:normal;">Excel</div>
<div class="a" style="left:526px;top:138px;width:1019px;height:205px;border:1px dashed #409eff"></div>
<div class="a" style="left:529px;top:139px;width:1013px;height:203px;border:1px solid #409eff;background:#fff"></div>
<div class="a" style="left:531px;top:141px;width:1009px;height:37px;background:#f5f7fd;"></div>
<div class="a" style="left:531px;top:178px;width:1009px;height:2px;background:#e4e7ed;"></div>
<div class="a" style="left:531px;top:180px;width:1009px;height:14px;background:#f5f7fd;"></div>
<div class="a" style="left:531px;top:194px;width:1009px;height:122px;background:#fff;"></div>
<div class="a" style="left:531px;top:316px;width:1009px;height:24px;background:#f5f7fd;"></div>
<div class="t" style="left:550px;top:153px;font-size:14px;color:#409eff;font-weight:normal;">供应商视图</div>
<div class="t" style="left:660px;top:153px;font-size:14px;color:#303133;font-weight:normal;">物料视图</div>
<div class="t" style="left:756px;top:153px;font-size:14px;color:#303133;font-weight:normal;">规格视图</div>
<div class="a" style="left:531px;top:195px;width:72px;height:28px;border:1px solid #b3d8ff;background:#ecf5ff;border-radius:3px"></div>
<svg class="a" style="left:546px;top:202px" width="12" height="12" viewBox="0 0 12 12"><path d="M6 0.5 V11.5 M0.5 6 H11.5" stroke="#409eff" stroke-width="1"/></svg>
<div class="t" style="left:563px;top:202px;font-size:12px;color:#409eff;font-weight:normal;">新增</div>
<div class="a" style="left:531px;top:233px;width:1009px;height:1px;background:#ebeef5;"></div>
<div class="a" style="left:531px;top:234px;width:1009px;height:30px;background:#f7f7f7;"></div>
<div class="a" style="left:531px;top:264px;width:1009px;height:1px;background:#ebeef5;"></div>
<div class="a" style="left:531px;top:315px;width:1009px;height:1px;background:#ebeef5;"></div>
<div class="a" style="left:709px;top:234px;width:1px;height:30px;background:#ebeef5;"></div>
<div class="a" style="left:889px;top:234px;width:1px;height:30px;background:#ebeef5;"></div>
<div class="a" style="left:1117px;top:234px;width:1px;height:30px;background:#ebeef5;"></div>
<div class="a" style="left:1329px;top:234px;width:1px;height:30px;background:#ebeef5;"></div>
<div class="a" style="left:1539px;top:234px;width:1px;height:30px;background:#ebeef5;"></div>
<div class="t" style="left:540px;top:242px;font-size:14px;color:#555;font-weight:bold;">供应商编码</div>
<div class="t" style="left:720px;top:242px;font-size:14px;color:#555;font-weight:bold;">供应商名称</div>
<div class="t" style="left:900px;top:242px;font-size:14px;color:#555;font-weight:bold;">统一社会信用代码</div>
<div class="t" style="left:1128px;top:242px;font-size:14px;color:#555;font-weight:bold;">供应商审核状态</div>
<div class="t" style="left:1340px;top:242px;font-size:14px;color:#555;font-weight:bold;">操作</div>
<div class="t" style="left:1007px;top:283px;font-size:14px;color:#555;font-weight:normal;">暂无数据</div>
<div class="a" style="left:1494px;top:129px;width:22px;height:22px;border:1px solid #409eff;border-radius:5px;background:#fff"></div>
<svg class="a" style="left:1499px;top:134px" width="12" height="12" viewBox="0 0 12 12"><rect x="3.5" y="0.8" width="7.5" height="7.5" rx="1.3" fill="none" stroke="#409eff" stroke-width="1"/><path d="M2.5 3 H1.8 Q0.8 3 0.8 4 V10 Q0.8 11 1.8 11 H7.5 Q8.5 11 8.5 10 V9.3" fill="none" stroke="#409eff" stroke-width="1"/></svg>
<div class="a" style="left:1519px;top:129px;width:22px;height:22px;border:1px solid #f56c6c;border-radius:5px;background:#fff"></div>
<svg class="a" style="left:1524px;top:134px" width="12" height="12" viewBox="0 0 12 12"><path d="M0.8 2.5 H11 M4.2 2.5 V0.8 H7.6 V2.5 M2 2.5 V10.8 H9.8 V2.5 M4.8 4.5 V8.8 M7 4.5 V8.8" fill="none" stroke="#f56c6c" stroke-width="1"/></svg>
<svg class="a" style="left:1468px;top:838px" width="13" height="10" viewBox="0 0 13 10"><path d="M0.8 5 Q6.5 -1 12.2 5 Q6.5 11 0.8 5 Z" fill="none" stroke="#409eff" stroke-width="1"/><circle cx="6.5" cy="5" r="1.8" fill="none" stroke="#409eff" stroke-width="1"/></svg>
<div class="t" style="left:1489px;top:837px;font-size:12px;color:#409eff;font-weight:normal;">查看Api</div>
<div class="t" style="left:1568px;top:150px;font-size:14px;color:#454545;font-weight:bold;">组件</div>
<div class="a" style="left:1568px;top:171px;width:320px;height:32px;background:#f5f7fa;border:1px solid #e4e7ed;border-radius:4px;"></div>
<svg class="a" style="left:1579px;top:181px" width="14" height="13" viewBox="0 0 14 13"><rect x="0.8" y="2.5" width="12.4" height="10" rx="1" fill="none" stroke="#555" stroke-width="1"/><path d="M0.8 5 H13.2" stroke="#555" stroke-width="0.9"/><rect x="2.5" y="0.8" width="2.5" height="2" fill="none" stroke="#555" stroke-width="0.8"/><rect x="5.7" y="0.8" width="2.5" height="2" fill="none" stroke="#555" stroke-width="0.8"/><rect x="8.9" y="0.8" width="2.5" height="2" fill="none" stroke="#555" stroke-width="0.8"/><text x="7" y="11" font-size="5.5" text-anchor="middle" fill="#555" font-family="Liberation Sans">Tab</text></svg>
<div class="t" style="left:1603px;top:180px;font-size:13px;color:#303133;font-weight:normal;">标签页</div>
<div class="t" style="left:1568px;top:221px;font-size:14px;color:#454545;font-weight:bold;">字段</div>
<svg class="a" style="left:1874px;top:221px" width="13" height="13" viewBox="0 0 13 13"><path d="M11.2 5 A4.8 4.8 0 0 0 2.3 4.2 M1.8 8 A4.8 4.8 0 0 0 10.7 8.8" fill="none" stroke="#409eff" stroke-width="1.2"/><path d="M11.8 1.8 V5.3 H8.3 M1.2 11.2 V7.7 H4.7" fill="none" stroke="#409eff" stroke-width="1.1"/></svg>
<div class="a" style="left:1568px;top:243px;width:320px;height:32px;background:#fff;border:1px solid #dcdfe6;border-radius:4px;"></div>
<svg class="a" style="left:1580px;top:254px" width="12" height="12" viewBox="0 0 12 12"><rect x="0.8" y="0.8" width="10.4" height="10.4" rx="1.5" fill="#fff" stroke="#5cb3ea" stroke-width="1.5"/><path d="M3.5 3.2 H8.5 M6 3.2 V9" stroke="#2b7fd0" stroke-width="1.1"/></svg>
<div class="t" style="left:1599px;top:252px;font-size:13px;color:#959595;font-weight:normal;">请输入字段名（v-model)</div>
<svg class="a" style="left:1869px;top:256px" width="12" height="7" viewBox="0 0 12 7"><path d="M1 1 L6 6 L11 1" fill="none" stroke="#a8abb2" stroke-width="1"/></svg>
<div class="t" style="left:1568px;top:293px;font-size:14px;color:#454545;font-weight:bold;">组件标识</div>
<div class="a" style="left:1568px;top:315px;width:320px;height:32px;background:#fff;border:1px solid #dcdfe6;border-radius:4px;"></div>
<svg class="a" style="left:1579px;top:325px" width="14" height="13" viewBox="0 0 14 13"><rect x="0.8" y="2.5" width="12.4" height="10" rx="1" fill="none" stroke="#555" stroke-width="1"/><path d="M0.8 5 H13.2" stroke="#555" stroke-width="0.9"/><rect x="2.5" y="0.8" width="2.5" height="2" fill="none" stroke="#555" stroke-width="0.8"/><rect x="5.7" y="0.8" width="2.5" height="2" fill="none" stroke="#555" stroke-width="0.8"/><rect x="8.9" y="0.8" width="2.5" height="2" fill="none" stroke="#555" stroke-width="0.8"/><text x="7" y="11" font-size="5.5" text-anchor="middle" fill="#555" font-family="Liberation Sans">Tab</text></svg>
<div class="t" style="left:1603px;top:324px;font-size:13px;color:#303133;font-weight:normal;">tabs_35164073</div>
<div class="t" style="left:1568px;top:365px;font-size:14px;color:#454545;font-weight:bold;">标题</div>
<div class="a" style="left:1814px;top:367px;width:14px;height:14px;background:#fff;border:1px solid #dcdfe6;border-radius:2px;"></div>
<div class="t" style="left:1832px;top:365px;font-size:14px;color:#454545;font-weight:bold;">显示标签</div>
<div class="a" style="left:1568px;top:387px;width:320px;height:32px;background:#fff;border:1px solid #dcdfe6;border-radius:4px;"></div>
<div class="a" style="left:1862px;top:388px;width:25px;height:30px;background:#f5f7fa;border-left:1px solid #dcdfe6;border-radius:0 3px 3px 0"></div>
<div class="t" style="left:1579px;top:396px;font-size:13px;color:#303133;font-weight:normal;">标签页</div>
<div class="t" style="left:1870px;top:396px;font-size:13px;color:#606266;font-weight:normal;">V</div>
<div class="t" style="left:1568px;top:437px;font-size:14px;color:#454545;font-weight:bold;">标签样式</div>
<div class="a" style="left:1568px;top:459px;width:205px;height:32px;background:#fff;border:1px solid #dcdfe6;border-radius:4px;"></div>
<div class="a" style="left:1568px;top:459px;width:56px;height:32px;background:#409eff;border-radius:4px 0 0 4px"></div>
<div class="a" style="left:1677px;top:460px;width:1px;height:30px;background:#dcdfe6;"></div>
<div class="t" style="left:1583px;top:470px;font-size:12px;color:#fff;font-weight:normal;">默认</div>
<div class="t" style="left:1639px;top:470px;font-size:12px;color:#606266;font-weight:normal;">card</div>
<div class="t" style="left:1694px;top:470px;font-size:12px;color:#606266;font-weight:normal;">border-card</div>
<div class="t" style="left:1568px;top:509px;font-size:14px;color:#454545;font-weight:bold;">标签位置</div>
<div class="a" style="left:1568px;top:531px;width:221px;height:32px;background:#fff;border:1px solid #dcdfe6;border-radius:4px;"></div>
<div class="a" style="left:1568px;top:531px;width:56px;height:32px;background:#409eff;border-radius:4px 0 0 4px"></div>
<div class="a" style="left:1678px;top:532px;width:1px;height:30px;background:#dcdfe6;"></div>
<div class="a" style="left:1733px;top:532px;width:1px;height:30px;background:#dcdfe6;"></div>
<div class="t" style="left:1584px;top:542px;font-size:12px;color:#fff;font-weight:normal;">靠上</div>
<div class="t" style="left:1638px;top:542px;font-size:12px;color:#606266;font-weight:normal;">靠右</div>
<div class="t" style="left:1693px;top:542px;font-size:12px;color:#606266;font-weight:normal;">靠下</div>
<div class="t" style="left:1748px;top:542px;font-size:12px;color:#606266;font-weight:normal;">靠左</div>
<div class="a" style="left:1568px;top:583px;width:119px;height:1px;background:#e4e7ed;"></div>
<div class="a" style="left:1769px;top:583px;width:119px;height:1px;background:#e4e7ed;"></div>
<div class="t" style="left:1707px;top:576px;font-size:14px;color:#303133;font-weight:normal;">标签页</div>
<div class="a" style="left:1574px;top:607px;width:283px;height:31px;background:#fff;border:1px solid #dcdfe6;border-radius:4px;"></div>
<div class="a" style="left:1831px;top:608px;width:25px;height:29px;background:#f5f7fa;border-left:1px solid #dcdfe6;border-radius:0 3px 3px 0"></div>
<div class="t" style="left:1840px;top:617px;font-size:13px;color:#606266;font-weight:normal;">V</div>
<div class="t" style="left:1585px;top:616px;font-size:12px;color:#303133;font-weight:normal;">供应商视图</div>
<svg class="a" style="left:1863px;top:613px" width="20" height="20" viewBox="0 0 20 20"><circle cx="10" cy="10" r="9" fill="none" stroke="#f56c6c" stroke-width="1.1"/><path d="M5.5 10 H14.5" stroke="#f56c6c" stroke-width="1.2"/></svg>
<div class="a" style="left:1574px;top:644px;width:283px;height:32px;background:#fff;border:1px solid #dcdfe6;border-radius:4px;"></div>
<div class="a" style="left:1575px;top:645px;width:88px;height:30px;background:#f5f7fa;border-right:1px solid #dcdfe6;border-radius:3px 0 0 3px"></div>
<div class="t" style="left:1595px;top:654px;font-size:12px;color:#909399;font-weight:normal;">角标值</div>
<div class="a" style="left:1831px;top:645px;width:25px;height:30px;background:#f5f7fa;border-left:1px solid #dcdfe6;border-radius:0 3px 3px 0"></div>
<div class="t" style="left:1840px;top:654px;font-size:13px;color:#606266;font-weight:normal;">V</div>
<div class="t" style="left:1674px;top:654px;font-size:12px;color:#a8abb2;font-weight:normal;">角标值</div>
<svg class="a" style="left:1866px;top:647px" width="15" height="16" viewBox="0 0 15 16"><path d="M7.5 1 V15.5 M1.5 7 L7.5 1 L13.5 7" fill="none" stroke="#409eff" stroke-width="1.2"/></svg>
<div class="a" style="left:1574px;top:681px;width:283px;height:28px;background:#fff;border:1px solid #dcdfe6;border-radius:4px;"></div>
<div class="a" style="left:1575px;top:682px;width:88px;height:26px;background:#f5f7fa;border-right:1px solid #dcdfe6;border-radius:3px 0 0 3px"></div>
<div class="t" style="left:1595px;top:689px;font-size:12px;color:#909399;font-weight:normal;">显示条件</div>
<div class="a" style="left:1830px;top:682px;width:26px;height:26px;background:#f5f7fa;border-left:1px solid #dcdfe6;border-radius:0 3px 3px 0"></div>
<div class="t" style="left:1839px;top:689px;font-size:13px;color:#606266;font-weight:normal;">C</div>
<svg class="a" style="left:1866px;top:690px" width="15" height="17" viewBox="0 0 15 17"><path d="M7.5 0.5 V15.5 M1.5 9.5 L7.5 15.5 L13.5 9.5" fill="none" stroke="#409eff" stroke-width="1.2"/></svg>
<div class="a" style="left:1574px;top:714px;width:283px;height:28px;background:#fff;border:1px solid #dcdfe6;border-radius:4px;"></div>
<div class="a" style="left:1575px;top:715px;width:64px;height:26px;background:#f5f7fa;border-right:1px solid #dcdfe6;border-radius:3px 0 0 3px"></div>
<div class="t" style="left:1595px;top:722px;font-size:12px;color:#909399;font-weight:normal;">图标</div>
<div class="a" style="left:1814px;top:715px;width:42px;height:26px;background:#f5f7fa;border-left:1px solid #dcdfe6;border-radius:0 3px 3px 0"></div>
<svg class="a" style="left:1829px;top:722px" width="11" height="11" viewBox="0 0 11 11"><circle cx="5" cy="5" r="4.2" fill="none" stroke="#909399" stroke-width="1"/><path d="M8 8 L10.3 10.3" stroke="#909399" stroke-width="1"/></svg>
<div class="a" style="left:1574px;top:757px;width:283px;height:31px;background:#fff;border:1px solid #dcdfe6;border-radius:4px;"></div>
<div class="a" style="left:1831px;top:758px;width:25px;height:29px;background:#f5f7fa;border-left:1px solid #dcdfe6;border-radius:0 3px 3px 0"></div>
<div class="t" style="left:1840px;top:767px;font-size:13px;color:#606266;font-weight:normal;">V</div>
<div class="t" style="left:1585px;top:766px;font-size:12px;color:#303133;font-weight:normal;">物料视图</div>
<svg class="a" style="left:1863px;top:763px" width="20" height="20" viewBox="0 0 20 20"><circle cx="10" cy="10" r="9" fill="none" stroke="#f56c6c" stroke-width="1.1"/><path d="M5.5 10 H14.5" stroke="#f56c6c" stroke-width="1.2"/></svg>
<div class="a" style="left:1574px;top:794px;width:283px;height:3px;overflow:hidden"><div style="position:absolute;left:0;top:0;width:283px;height:30px;border:1px solid #dcdfe6;border-radius:4px;background:#fff"></div><div style="position:absolute;left:89px;top:0;width:1px;height:8px;background:#dcdfe6"></div><div style="position:absolute;left:257px;top:0;width:1px;height:8px;background:#dcdfe6"></div></div>
<div class="a" style="left:1558px;top:801px;width:340px;height:1px;background:#ebeef5;"></div>
<div class="a" style="left:1558px;top:802px;width:340px;height:31px;background:#f4f4f4;"></div>
<div class="a" style="left:1558px;top:833px;width:340px;height:1px;background:#ebeef5;"></div>
<div class="a" style="left:1558px;top:834px;width:340px;height:29px;background:#f4f4f4;"></div>
<div class="t" style="left:1578px;top:811px;font-size:13px;color:#222;font-weight:normal;">高级</div>
<div class="t" style="left:1578px;top:842px;font-size:13px;color:#222;font-weight:normal;">样式</div>
<svg class="a" style="left:1880px;top:812px" width="7" height="11" viewBox="0 0 7 11"><path d="M1 1 L5.5 5.5 L1 10" fill="none" stroke="#666" stroke-width="1"/></svg>
<svg class="a" style="left:1880px;top:843px" width="7" height="11" viewBox="0 0 7 11"><path d="M1 1 L5.5 5.5 L1 10" fill="none" stroke="#666" stroke-width="1"/></svg>
<div class="a" style="left:1899px;top:111px;width:21px;height:1px;background:#cfcfcf;"></div>
<div class="a" style="left:1899px;top:207px;width:21px;height:1px;background:#cfcfcf;"></div>
<div class="a" style="left:1899px;top:304px;width:21px;height:1px;background:#cfcfcf;"></div>
<div class="t" style="left:1902px;top:40px;font-size:12px;color:#111;font-weight:normal;">数</div>
<div class="t" style="left:1902px;top:56px;font-size:12px;color:#111;font-weight:normal;">据</div>
<div class="t" style="left:1902px;top:72px;font-size:12px;color:#111;font-weight:normal;">源</div>
<div class="t" style="left:1902px;top:121px;font-size:12px;color:#111;font-weight:normal;">离</div>
<div class="t" style="left:1902px;top:137px;font-size:12px;color:#111;font-weight:normal;">线</div>
<div class="t" style="left:1902px;top:153px;font-size:12px;color:#111;font-weight:normal;">资</div>
<div class="t" style="left:1902px;top:169px;font-size:12px;color:#111;font-weight:normal;">源</div>
<div class="t" style="left:1902px;top:216px;font-size:12px;color:#111;font-weight:normal;">三</div>
<div class="t" style="left:1902px;top:232px;font-size:12px;color:#111;font-weight:normal;">方</div>
<div class="t" style="left:1902px;top:248px;font-size:12px;color:#111;font-weight:normal;">服</div>
<div class="t" style="left:1902px;top:264px;font-size:12px;color:#111;font-weight:normal;">务</div>
<div class="t" style="left:1902px;top:313px;font-size:12px;color:#111;font-weight:normal;">命</div>
<div class="t" style="left:1902px;top:329px;font-size:12px;color:#111;font-weight:normal;">名</div>
<div class="t" style="left:1904px;top:345px;font-size:12px;color:#111;font-weight:normal;">S</div>
<div class="t" style="left:1904px;top:360px;font-size:12px;color:#111;font-weight:normal;">q</div>
<div class="t" style="left:1906px;top:373px;font-size:12px;color:#111;font-weight:normal;">l</div>
<svg class="a" style="left:28px;top:866px" width="24" height="20" viewBox="0 0 24 20"><path d="M8 11 V9 A4.6 4.6 0 0 1 17.2 9 V10.5" fill="none" stroke="#707070" stroke-width="1"/><path d="M12.6 5.5 V10" stroke="#909090" stroke-width="0.9"/><path d="M5.5 6.5 L8.8 10.5 L5.5 15.5 M19.2 6.5 L17.2 9" fill="none" stroke="#808080" stroke-width="1"/><path d="M12.5 12.3 H19.5 M12.5 14.3 H19.5 M12.5 16.3 H19.5" stroke="#707070" stroke-width="1"/></svg>
<div class="t" style="left:54px;top:871px;font-size:12px;color:#111;font-weight:normal;">调试信息</div>
<svg class="a" style="left:122px;top:871px" width="15" height="12" viewBox="0 0 15 12"><path d="M1 1.6 H2.6 M1 5.5 H2.6 M1 9.8 H2.6 M4.3 1.6 H14.3 M4.3 5.5 H14.3 M4.3 9.8 H14.3" stroke="#555" stroke-width="1.5"/></svg>
<div class="t" style="left:146px;top:871px;font-size:12px;color:#111;font-weight:normal;">问题</div>
<div class="t" style="left:20px;top:894px;font-size:12px;color:#111;font-weight:normal;">查看资源「多表单视图页面」详情</div>
<div class="a" style="left:58px;top:134px;width:132px;height:32px;border:3px solid #ff1a1a;border-radius:4px"></div>
<div class="a" style="left:64px;top:168px;width:103px;height:73px;border:3px solid #ff1a1a;border-radius:4px"></div>
<svg class="a" style="left:0px;top:0px" width="1920" height="911" viewBox="0 0 1920 911"><path d="M196 144.6 L507.2 159.8 L504.6 154.2 L518.8 163.8 L503.5 171.6 L506.9 166.5 Z" fill="#fa1e1e"/></svg>
</body></html>
